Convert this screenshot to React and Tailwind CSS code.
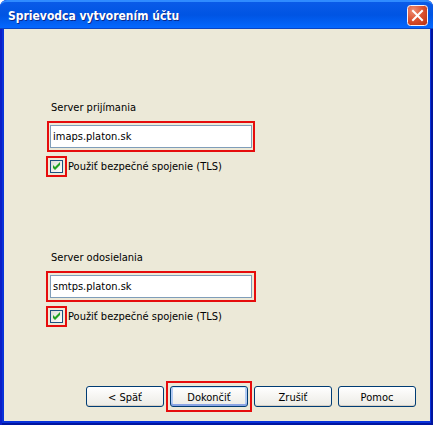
import { useState } from "react";

function CloseIcon() {
    return (
        <svg viewBox="0 0 21 21" className="w-[21px] h-[21px]" aria-hidden="true">
            <defs>
                <radialGradient id="closeFill" cx="0.3" cy="0.25" r="0.9">
                    <stop offset="0" stopColor="#ee8e74" />
                    <stop offset="0.5" stopColor="#dd5433" />
                    <stop offset="1" stopColor="#bf3512" />
                </radialGradient>
            </defs>
            <rect x="0.5" y="0.5" width="20" height="20" rx="3" fill="url(#closeFill)" stroke="#f4f2fb" />
            <path d="M6 6 L15 15 M15 6 L6 15" stroke="#ffffff" strokeWidth="2" strokeLinecap="square" />
        </svg>
    );
}

function ServerGroup({ id, label, value, frame }) {
    const [server, setServer] = useState(value);
    const [tls, setTls] = useState(true);

    return (
        <div className="flex flex-col items-start">
            <label htmlFor={id} className="ml-[5px] h-4 leading-4">{label}</label>

            <div className={`mt-[5px] border-2 border-[#e60c0c] ${frame}`}>
                <input
                    id={id}
                    type="text"
                    value={server}
                    onChange={(e) => setServer(e.target.value)}
                    className="block w-full h-[23px] px-[2px] bg-white border border-[#7f9db9] outline-none"
                />
            </div>

            <div className="mt-1 flex items-center gap-px">
                <span className="relative block border-2 border-[#e60c0c] p-[2px]">
                    <input
                        id={`${id}-tls`}
                        type="checkbox"
                        checked={tls}
                        onChange={(e) => setTls(e.target.checked)}
                        className="block appearance-none w-[13px] h-[13px] border border-[#1c5180] bg-linear-to-br from-[#dcdcd7] to-white"
                    />
                    {tls && (
                        <svg viewBox="0 0 13 13" className="absolute left-[2px] top-[2px] w-[13px] h-[13px] pointer-events-none" aria-hidden="true">
                            <path d="M3 5 L5 7 L10 2 V5 L5 10 L3 8 Z" fill="#21a121" />
                        </svg>
                    )}
                </span>
                <label htmlFor={`${id}-tls`} className="leading-4">Použiť bezpečné spojenie (TLS)</label>
            </div>
        </div>
    );
}

function DialogButton({ children, primary }) {
    return (
        <button
            type="button"
            className={`w-[78px] h-[21px] pt-[2px] leading-4 rounded-[3px] border border-[#003c74] bg-linear-to-b from-white to-[#ecebe5] ${
                primary ? "shadow-[inset_0_1px_0_#cee7ff,inset_0_-2px_0_#8aa4e4,inset_2px_0_0_#b2cbf4,inset_-2px_0_0_#b2cbf4]" : "shadow-[inset_0_-1px_0_#d6d0c5]"
            }`}
        >
            {children}
        </button>
    );
}

export default function App() {
    return (
        <div className="min-h-screen flex flex-col bg-[#0831d9] shadow-[inset_2px_0_0_#0a1fc8,inset_-2px_-2px_0_#00159e] rounded-t-[7px] text-black text-[11px] font-['DejaVu_Sans_Condensed','DejaVu_Sans',sans-serif]">
            {/* Title bar */}
            <header className="h-[29px] pt-px pl-2 pr-[5px] flex items-center justify-between rounded-t-[7px] bg-linear-to-b from-[#0a5be8] via-[#0054e3] to-[#0468ff] border-t-2 border-t-[#2f8bff] border-b border-b-[#0a45c4]">
                <h1 className="text-[12px] leading-4 font-bold text-white [text-shadow:1px_1px_0_#0a2a8c]">
                    Sprievodca vytvorením účtu
                </h1>
                <button type="button" aria-label="Zavrieť">
                    <CloseIcon />
                </button>
            </header>

            {/* Window body */}
            <main className="flex-1 flex flex-col ml-1 mr-[3px] mb-1 bg-[#ece9d8]">
                <div className="pt-[71px] pl-[42px] flex flex-col gap-[73px]">
                    <ServerGroup id="incoming" label="Server prijímania" value="imaps.platon.sk" frame="ml-px w-[208px] px-px py-[2px]" />
                    <ServerGroup id="outgoing" label="Server odosielania" value="smtps.platon.sk" frame="w-[210px] p-[2px]" />
                </div>

                <div className="mt-auto mr-[14px] mb-[9px] flex items-center justify-end gap-[6px]">
                    <DialogButton>&lt; Späť</DialogButton>
                    <span className="-mx-1 px-[2px] py-[3px] border-2 border-[#e60c0c] flex">
                        <DialogButton primary>Dokončiť</DialogButton>
                    </span>
                    <DialogButton>Zrušiť</DialogButton>
                    <DialogButton>Pomoc</DialogButton>
                </div>
            </main>
        </div>
    );
}
